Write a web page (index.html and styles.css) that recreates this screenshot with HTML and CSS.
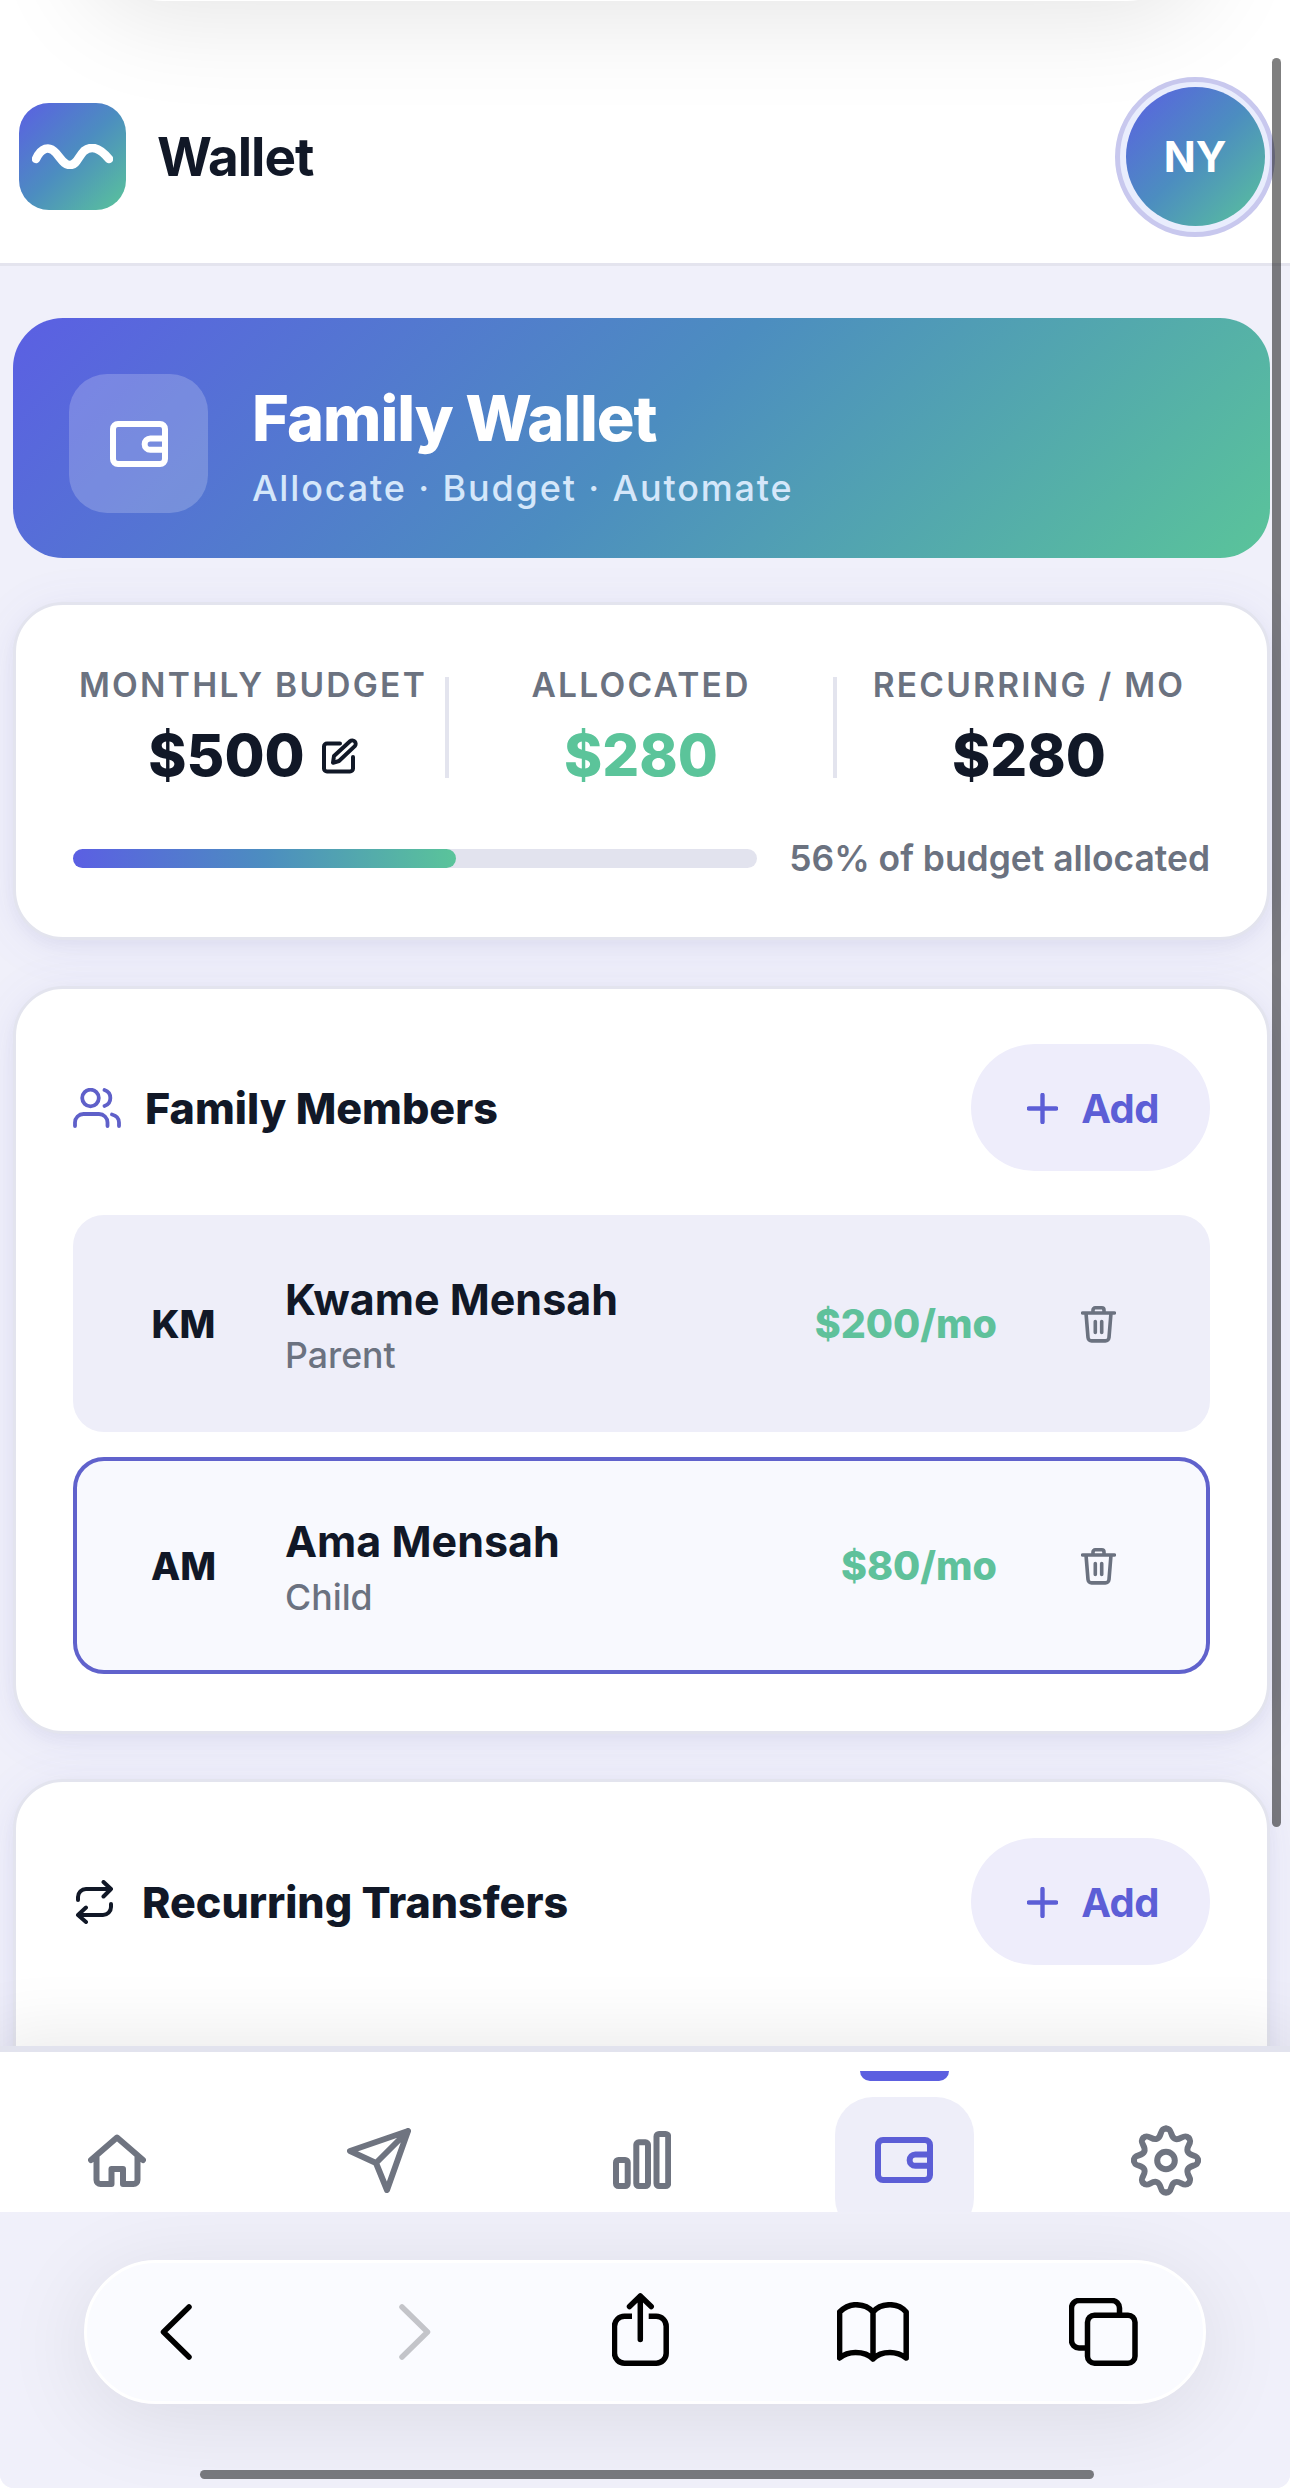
FILE: index.html
```html
<!DOCTYPE html>
<html lang="en">
<head>
  <meta charset="UTF-8">
  <title>Wallet</title>
  <link rel="stylesheet" href="styles.css">
</head>
<body>

<div class="phone">
  <div class="app">
    <header class="topbar">
      <div class="brand">
        <div class="logo">
          <svg width="81" height="25" viewBox="0 0 81 25"><path d="M4 15C9 4 17 1 24 9c6 7 8 12 14 12 7 0 8-8 14-14 8-6 16-3 25 8"/></svg>
        </div>
        <h1>Wallet</h1>
      </div>
      <div class="avatar">NY</div>
    </header>

    <main>
      <section class="hero">
        <div class="hero-icon">
          <svg class="icon" width="58" height="46" viewBox="0 0 58 46"><rect x="3" y="3" width="52" height="40" rx="5"/><path d="M55 17.5H40.3a5.65 5.65 0 0 0 0 11.3H55"/></svg>
        </div>
        <div class="hero-text">
          <h2>Family Wallet</h2>
          <p>Allocate · Budget · Automate</p>
        </div>
      </section>

      <section class="card stats-card">
        <div class="stats">
          <div class="stat">
            <span class="stat-label">Monthly Budget</span>
            <span class="stat-value">$500
              <svg class="icon edit" width="36" height="37" viewBox="0 0 36 37"><path d="M18 5.5H5a3 3 0 0 0-3 3v22a3 3 0 0 0 3 3h23a3 3 0 0 0 3-3V19M12 18 28 3.3a3.4 3.4 0 0 1 4.8 4.8L17 23l-6 1.8z"/></svg>
            </span>
          </div>
          <div class="stat">
            <span class="stat-label">Allocated</span>
            <span class="stat-value green">$280</span>
          </div>
          <div class="stat">
            <span class="stat-label">Recurring / mo</span>
            <span class="stat-value">$280</span>
          </div>
        </div>
        <div class="progress-row">
          <div class="progress"><div class="progress-fill" style="width: 56%"></div></div>
          <span class="progress-text">56% of budget allocated</span>
        </div>
      </section>

      <section class="card">
        <div class="card-head">
          <h3>
            <svg class="icon users" width="48" height="40" viewBox="0 0 48 40"><circle cx="17.5" cy="10" r="8.3"/><path d="M2 38v-3.5A8.5 8.5 0 0 1 10.5 26H26a8.5 8.5 0 0 1 8.5 8.5V38M31.5 2a8.4 8.4 0 0 1 0 16M39 26.5c4 1 7 3.800 7 8V38"/></svg>
            Family Members
          </h3>
          <button class="add-btn"><svg class="icon plus" width="31" height="31" viewBox="0 0 31 31"><path d="M15.5 2v27M2 15.5h27"/></svg>Add</button>
        </div>
        <div class="member">
          <div class="initials">KM</div>
          <div class="member-info">
            <strong>Kwame Mensah</strong>
            <span>Parent</span>
          </div>
          <div class="amount">$200/mo</div>
          <svg class="icon trash" width="35" height="37" viewBox="0 0 35 37"><path d="M1.6 7h31.8M12 6.5V4a2.2 2.2 0 0 1 2.2-2.2h6.6A2.2 2.2 0 0 1 23 4v2.5M5 7l2 24.5a3.6 3.6 0 0 0 3.6 3.4h13.8a3.6 3.6 0 0 0 3.6-3.4L30 7M14.3 15.5v11M20.7 15.5v11"/></svg>
        </div>
        <div class="member active">
          <div class="initials">AM</div>
          <div class="member-info">
            <strong>Ama Mensah</strong>
            <span>Child</span>
          </div>
          <div class="amount">$80/mo</div>
          <svg class="icon trash" width="35" height="37" viewBox="0 0 35 37"><path d="M1.6 7h31.8M12 6.5V4a2.2 2.2 0 0 1 2.2-2.2h6.6A2.2 2.2 0 0 1 23 4v2.5M5 7l2 24.5a3.6 3.6 0 0 0 3.6 3.4h13.8a3.6 3.6 0 0 0 3.6-3.4L30 7M14.3 15.5v11M20.7 15.5v11"/></svg>
        </div>
      </section>

      <section class="card transfers">
        <div class="card-head">
          <h3>
            <svg class="icon repeat" width="44" height="44" viewBox="-3 0 44 44"><path d="M2 20v-3a8 8 0 0 1 8-8h25M27.5 2 35 9l-7.5 7.5M35 24v3a8 8 0 0 1-8 8H2M10 27.500 2 35l8 7"/></svg>
            Recurring Transfers
          </h3>
          <button class="add-btn"><svg class="icon plus" width="31" height="31" viewBox="0 0 31 31"><path d="M15.5 2v27M2 15.5h27"/></svg>Add</button>
        </div>
      </section>
    </main>

    <nav class="tabs">
      <a class="tab"><svg class="icon" width="58" height="53" viewBox="0 0 58 53"><path d="M3 26 29 3.5 55 26M8.500 22v24a4 4 0 0 0 4 4h11V35H35v15h10.500a4 4 0 0 0 4-4V22"/></svg></a>
      <a class="tab"><svg class="icon" width="64" height="65" viewBox="0 0 64 65"><path d="M61 3 3 23l26 12 11 27zM61 3 29 35"/></svg></a>
      <a class="tab"><svg class="icon" width="58" height="58" viewBox="0 0 58 58"><rect x="3" y="29" width="11.7" height="26" rx="2.5"/><rect x="23.3" y="11.3" width="11.7" height="43.7" rx="2.5"/><rect x="43.5" y="3" width="11.7" height="52" rx="2.5"/></svg></a>
      <a class="tab current">
        <span class="tab-box"><svg class="icon" width="58" height="46" viewBox="0 0 58 46"><rect x="3" y="3" width="52" height="40" rx="5"/><path d="M55 17.5H40.3a5.65 5.65 0 0 0 0 11.3H55"/></svg></span>
      </a>
      <a class="tab">
        <svg class="icon" width="70" height="71" viewBox="-35 -35.5 70 71">
          <defs><path id="tooth" d="M0-32C7-32 3.5-24 9-21.7S17.7-27.6 22.63-22.63"/></defs>
          <use href="#tooth"/>
          <use href="#tooth" transform="rotate(45)"/>
          <use href="#tooth" transform="rotate(90)"/>
          <use href="#tooth" transform="rotate(135)"/>
          <use href="#tooth" transform="rotate(180)"/>
          <use href="#tooth" transform="rotate(225)"/>
          <use href="#tooth" transform="rotate(270)"/>
          <use href="#tooth" transform="rotate(315)"/>
          <circle r="8.8"/>
        </svg>
      </a>
    </nav>
  </div>

  <footer class="browser">
    <div class="toolbar">
      <svg class="icon back" width="32" height="56" viewBox="0 0 32 56"><path d="M29 3 3.5 28 29 53"/></svg>
      <svg class="icon disabled" width="32" height="56" viewBox="0 0 32 56"><path d="M3 3l25.5 25L3 53"/></svg>
      <svg class="icon share" width="58" height="73" viewBox="0 0 58 73"><path class="butt" d="M20 23.2h-7.5a10 10 0 0 0-10 10v27a10 10 0 0 0 10 10h31.7a10 10 0 0 0 10-10v-27a10 10 0 0 0-10-10h-7.5"/><path d="M28.3 3v43.5M17.5 13.5 28.3 3l10.9 10.5"/></svg>
      <svg class="icon" width="72" height="60" viewBox="0 0 72 60"><path d="M2.6 10Q10 2.7 18.5 2.7 30 2.7 36 10 42 2.7 53 2.7 63 2.7 69.2 10v46Q62 50.5 53 50.5 42 50.5 36 57 30 50.5 18.5 50.5 9 50.5 2.6 56zM36 10v47"/></svg>
      <svg class="icon windows" width="69" height="68" viewBox="0 0 69 68"><rect x="18.5" y="17.2" width="47.5" height="48" rx="7"/><path d="M50.5 16v-6A7.500 7.500 0 0 0 43 2.500H10A7.500 7.500 0 0 0 2.500 10v32.500A7.500 7.500 0 0 0 10 50h7"/></svg>
    </div>
    <div class="home-bar"></div>
  </footer>

  <div class="address-bar"></div>
  <div class="scroll-thumb"></div>
</div>

</body>
</html>
```
FILE: styles.css
```css
* {
  box-sizing: border-box;
}

html {
  background: #fff;
}

body {
  margin: 0;
  font-family: 'Inter', 'Liberation Sans', sans-serif;
  color: #111827;
}

h1, h2, h3, p {
  margin: 0;
}

.phone {
  position: relative;
  width: 1290px;
  height: 2488px;
  overflow: hidden;
  background: #f0f0fa;
  border-radius: 0 0 14px 14px;
  display: flex;
  flex-direction: column;
}

.icon {
  fill: none;
  stroke: currentColor;
  stroke-width: 6;
  stroke-linecap: round;
  stroke-linejoin: round;
  flex-shrink: 0;
  display: block;
}

.app {
  height: 2212px;
  display: flex;
  flex-direction: column;
  overflow: hidden;
}

/* header */
.topbar {
  height: 266px;
  flex-shrink: 0;
  background: #fff;
  border-bottom: 3px solid #e4e4ee;
  padding: 50px 15px 0 19px;
  display: flex;
  align-items: center;
  justify-content: space-between;
}

.brand {
  display: flex;
  align-items: center;
  gap: 31px;
}

.logo {
  width: 107px;
  height: 107px;
  border-radius: 30px;
  background: linear-gradient(135deg, #5b5fe3, #4c8dc0 50%, #5ac49a);
  display: flex;
  align-items: center;
  justify-content: center;
}

.logo svg {
  fill: none;
  stroke: #fff;
  stroke-width: 8.5;
  stroke-linecap: round;
}

.brand h1 {
  font-size: 53px;
  font-weight: 700;
  letter-spacing: -1px;
}

.avatar {
  position: relative;
  z-index: 0;
  width: 160px;
  height: 160px;
  border: 5px solid #c8c8ee;
  border-radius: 50%;
  background: #e9edfd;
  color: #fff;
  font-size: 42px;
  font-weight: 700;
  display: flex;
  align-items: center;
  justify-content: center;
}

.avatar::before {
  content: "";
  position: absolute;
  inset: 5.5px;
  border-radius: 50%;
  background: linear-gradient(135deg, #5b5fe3, #4c8dc0 50%, #5ac49a);
  z-index: -1;
}

/* content */
main {
  height: 1780px;
  padding: 52px 20px 0 13px;
  display: flex;
  flex-direction: column;
}

.hero {
  height: 240px;
  flex-shrink: 0;
  border-radius: 50px;
  background: linear-gradient(135deg, #5b5fe3, #4c8dc0 50%, #5ac49a);
  padding: 11px 57px 0 56px;
  display: flex;
  align-items: center;
  gap: 44px;
  color: #fff;
  margin-bottom: 44px;
}

.hero-icon {
  width: 139px;
  height: 139px;
  border-radius: 38px;
  background: rgba(255, 255, 255, 0.2);
  display: flex;
  align-items: center;
  justify-content: center;
}

.hero h2 {
  font-size: 63px;
  line-height: 76px;
  font-weight: 800;
  letter-spacing: -1.05px;
}

.hero p {
  font-size: 36px;
  line-height: 50px;
  margin-top: 7px;
  margin-bottom: -6px;
  font-weight: 500;
  letter-spacing: 1.85px;
  color: #d5e7fa;
}

.card {
  flex-shrink: 0;
  background: #fff;
  border: 3px solid #e3e4ee;
  border-radius: 50px;
  padding: 55px 57px 57px;
  margin-bottom: 45px;
  box-shadow: 0 6px 50px rgba(91, 95, 200, 0.08), 0 6px 14px rgba(60, 62, 120, 0.05);
}

.stats-card {
  height: 338px;
  padding-top: 60px;
  margin-bottom: 46px;
}

.stats {
  display: grid;
  grid-template-columns: repeat(3, 388px);
  margin: 0 -14px;
}

.stat {
  position: relative;
  display: flex;
  flex-direction: column;
  align-items: center;
}

.stat + .stat::before {
  content: "";
  position: absolute;
  left: -2px;
  top: 12px;
  width: 4px;
  height: 101px;
  background: #e3e4ee;
}

.stat-label {
  font-size: 33.5px;
  line-height: 40px;
  font-weight: 600;
  letter-spacing: 2.25px;
  text-transform: uppercase;
  white-space: nowrap;
  color: #6b7280;
}

.stat-value {
  font-size: 58px;
  line-height: 70px;
  font-weight: 800;
  margin-top: 15px;
  display: flex;
  align-items: center;
  gap: 17px;
}

.edit {
  stroke-width: 4;
  margin-top: 2px;
}

.green {
  color: #5bc49a;
}

.progress-row {
  display: flex;
  align-items: center;
  gap: 32px;
  margin-top: 46px;
}

.progress {
  flex: 1;
  height: 19px;
  border-radius: 10px;
  background: #e2e3ee;
}

.progress-fill {
  height: 19px;
  border-radius: 10px;
  background: linear-gradient(90deg, #5b5fe3, #4c8dc0 50%, #5ac49a);
}

.progress-text {
  font-size: 35.4px;
  line-height: 44px;
  padding-top: 1px;
  font-weight: 600;
  color: #6b7280;
}

.card-head {
  height: 127px;
  display: flex;
  align-items: center;
  justify-content: space-between;
  margin-bottom: 44px;
}

.card-head h3 {
  font-size: 43px;
  font-weight: 800;
  display: flex;
  align-items: center;
  gap: 25px;
}

.users {
  color: #5f60c9;
  stroke-width: 3.8;
  margin-right: -1px;
}

.repeat {
  stroke-width: 4;
}

.add-btn {
  width: 239px;
  height: 127px;
  border: none;
  border-radius: 64px;
  padding: 1px 0 0 5px;
  background: #eeedfb;
  color: #5c5ed6;
  font-family: inherit;
  font-size: 40px;
  font-weight: 700;
  letter-spacing: -0.6px;
  display: flex;
  align-items: center;
  justify-content: center;
  gap: 23px;
}

.plus {
  stroke-width: 4.4;
}

.member {
  height: 217px;
  border-radius: 31px;
  background: #eeeef9;
  padding: 1px 94px 0 41px;
  display: flex;
  align-items: center;
}

.member.active {
  margin-top: 25px;
  background: #f8f9fe;
  box-shadow: inset 0 0 0 4px #6062cc;
}

.initials {
  width: 139px;
  text-align: center;
  font-size: 38px;
  font-weight: 800;
}

.member-info {
  flex: 1;
  margin-left: 32px;
  padding-top: 2px;
  display: flex;
  flex-direction: column;
}

.member-info strong {
  font-size: 43px;
  line-height: 60px;
  font-weight: 700;
}

.member-info span {
  font-size: 35.7px;
  line-height: 53px;
  font-weight: 500;
  color: #6b7280;
}

.amount {
  font-size: 39.4px;
  font-weight: 800;
  color: #5fc19b;
}

.trash {
  margin-left: 84px;
  stroke-width: 3.6;
  color: #6b7280;
}

.transfers {
  height: 400px;
  padding-top: 56px;
}

/* bottom navigation */
.tabs {
  height: 166px;
  flex-shrink: 0;
  position: relative;
  background: #fff;
  border-top: 6px solid #e2e3ee;
  box-shadow: 0 -8px 75px rgba(0, 0, 0, 0.09);
  display: grid;
  grid-template-columns: repeat(5, 262.3px);
  margin: 0 -14px;
}

.tab {
  position: relative;
  display: flex;
  align-items: center;
  justify-content: center;
  color: #6f7480;
  height: 216px;
}

.tab.current {
  color: #5c5ed6;
}

.tab.current::before {
  content: "";
  position: absolute;
  top: 19px;
  left: 87.5px;
  width: 89px;
  height: 10px;
  border-radius: 0 0 10px 10px;
  background: #5c5fe0;
}

.tab-box {
  width: 139px;
  height: 139px;
  flex-shrink: 0;
  margin-top: 12px;
  margin-left: 1px;
  padding: 0 2px 12px 0;
  border-radius: 38px;
  background: #eeeef9;
  display: flex;
  align-items: center;
  justify-content: center;
}

/* browser toolbar */
.browser {
  position: relative;
  flex: 1;
  background: #f0f0fa;
  overflow: hidden;
  padding-top: 48px;
}

.toolbar {
  width: 1122px;
  height: 144px;
  margin: 0 auto;
  border: 3px solid #fff;
  border-radius: 72px;
  background: #fafbff;
  box-shadow: 0 14px 90px rgba(0, 0, 0, 0.09);
  padding-right: 8px;
  display: grid;
  grid-template-columns: repeat(5, 232px);
  justify-content: center;
  justify-items: center;
  align-items: center;
  color: #000;
}

.toolbar .icon {
  stroke-width: 5.5;
}

.toolbar .back {
  margin-right: 3px;
}

.toolbar .disabled {
  margin-left: 12px;
  color: #c3c4c9;
}

.share {
  margin-top: -5px;
}

.windows {
  margin-right: 4px;
}

.toolbar .butt {
  stroke-linecap: butt;
}

.home-bar {
  width: 894px;
  height: 9px;
  border-radius: 5px;
  background: #77787d;
  margin: 66px 0 0 200px;
}

/* overlays: edge of the address bar and the page scrollbar */
.address-bar {
  position: absolute;
  top: -159px;
  left: 84px;
  width: 1122px;
  height: 160px;
  border-radius: 80px;
  background: #fff;
  box-shadow: 0 14px 100px 4px rgba(0, 0, 0, 0.1);
}

.scroll-thumb {
  position: absolute;
  top: 58px;
  left: 1272px;
  width: 9px;
  height: 1769px;
  border-radius: 5px;
  background: rgba(0, 0, 0, 0.5);
}
```
